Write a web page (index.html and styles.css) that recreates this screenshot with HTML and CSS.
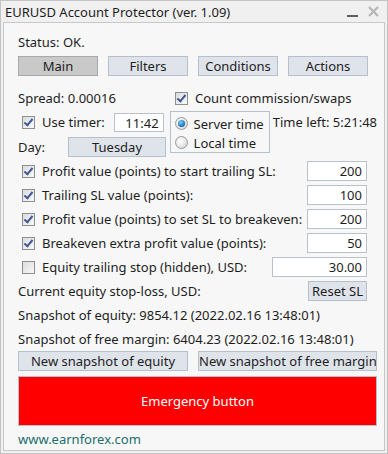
FILE: index.html
```html
<!DOCTYPE html>
<html lang="en">
<head>
  <meta charset="UTF-8" />
  <title>EURUSD Account Protector</title>
  <link rel="stylesheet" href="styles.css">
</head>
<body>
  <div class="window">
    <div class="titlebar">
      <span class="title">EURUSD Account Protector (ver. 1.09)</span>
      <span class="minimize"></span>
      <svg class="close" width="11" height="11" viewBox="0 0 11 11"><path d="M1 1 L10 10 M10 1 L1 10" stroke="#b8b8b8" stroke-width="2.4"/></svg>
    </div>

    <div class="panel">
      <div class="row status">Status: OK.</div>

      <div class="tabs">
        <button class="btn tab active">Main</button>
        <button class="btn tab">Filters</button>
        <button class="btn tab">Conditions</button>
        <button class="btn tab">Actions</button>
      </div>

      <div class="row spread">
        <span class="spread-label">Spread: 0.00016</span>
        <span class="check on"></span>
        <span class="lbl">Count commission/swaps</span>
      </div>

      <div class="timer-block">
        <div class="timer-left">
          <div class="row timer-row">
            <span class="check on"></span>
            <span class="lbl">Use timer:</span>
            <span class="field timer-field">11:42</span>
          </div>
          <div class="row day-row">
            <span class="day-label">Day:</span>
            <button class="btn day-btn">Tuesday</button>
          </div>
        </div>
        <div class="radio-group">
          <div class="radio-row"><span class="radio on"></span><span>Server time</span></div>
          <div class="radio-row"><span class="radio"></span><span>Local time</span></div>
        </div>
        <div class="time-left">Time left: 5:21:48</div>
      </div>

      <div class="row opt"><span class="check on"></span><span class="lbl">Profit value (points) to start trailing SL:</span><span class="field num">200</span></div>
      <div class="row opt"><span class="check on"></span><span class="lbl">Trailing SL value (points):</span><span class="field num">100</span></div>
      <div class="row opt"><span class="check on"></span><span class="lbl">Profit value (points) to set SL to breakeven:</span><span class="field num">200</span></div>
      <div class="row opt"><span class="check on"></span><span class="lbl">Breakeven extra profit value (points):</span><span class="field num">50</span></div>
      <div class="row opt"><span class="check"></span><span class="lbl">Equity trailing stop (hidden), USD:</span><span class="field wide">30.00</span></div>

      <div class="row plain"><span>Current equity stop-loss, USD:</span><button class="btn reset">Reset SL</button></div>
      <div class="row plain">Snapshot of equity: 9854.12 (2022.02.16 13:48:01)</div>
      <div class="row plain">Snapshot of free margin: 6404.23 (2022.02.16 13:48:01)</div>

      <div class="snap-buttons">
        <button class="btn snap">New snapshot of equity</button>
        <button class="btn snap snap-wide">New snapshot of free margin</button>
      </div>

      <button class="emergency">Emergency button</button>

      <div class="footer">www.earnforex.com</div>
    </div>
  </div>
</body>
</html>
```

FILE: styles.css
```css
* { box-sizing: border-box; }
body, html {
  margin: 0; padding: 0;
  font-family: "Noto Sans", sans-serif;
  font-size: 13px;
  color: #1e1e1e;
  background: #ffffff;
}
.window {
  width: 388px;
  height: 454px;
  border: 1px solid #c4c4c4;
  background: #f0f0f0;
  display: flex;
  flex-direction: column;
}
.titlebar {
  height: 21px;
  display: flex;
  align-items: center;
  padding: 0 0 0 4px;
  font-size: 13px;
}
.title { flex: 1; }
.minimize {
  width: 11px;
  height: 2px;
  background: #606060;
  margin-top: 9px;
  margin-right: 10px;
}
.close { margin-right: 8px; }
.panel {
  flex: 1;
  margin: 0 2px 2px 2px;
  border: 1px solid #c8c8c8;
  background: #f7f7f7;
  padding: 9px 7px 0 14px;
}
.row {
  display: flex;
  align-items: center;
  height: 24px;
  white-space: nowrap;
}
.status { height: 20px; }
.tabs {
  display: flex;
  gap: 10px;
  margin-top: 4px;
}
.btn {
  font-family: inherit;
  font-size: 13px;
  color: #1e1e1e;
  background: #dfe3ea;
  border: 1px solid #b6bfcc;
  padding: 0;
  height: 20px;
  line-height: 18px;
  white-space: nowrap;
}
.tab { width: 80px; }
.tab.active {
  background: #c9c9c9;
  border-color: #a9a9a9;
}
.spread { margin-top: 10px; }
.spread-label { width: 157px; }
.check {
  width: 13px;
  height: 13px;
  border: 1px solid #8e8f8f;
  background: linear-gradient(135deg, #dcdcdc, #f8f8f8);
  position: relative;
  flex: none;
}
.check.on::after {
  content: "";
  position: absolute;
  left: 3px;
  top: 0px;
  width: 3px;
  height: 7px;
  border: solid #405a96;
  border-width: 0 2px 2px 0;
  transform: rotate(40deg);
}
.lbl { margin-left: 7px; }
.timer-block {
  display: flex;
  height: 49px;
}
.timer-left { width: 153px; }
.timer-row { height: 22px; margin-top: 1px; padding-left: 4px; }
.timer-row .lbl { flex: 1; }
.field {
  background: #ffffff;
  border: 1px solid #b9c1cc;
  height: 20px;
  line-height: 18px;
  text-align: right;
  padding-right: 4px;
}
.timer-field { width: 50px; height: 19px; margin-right: 6px; }
.day-row { height: 24px; margin-top: 2px; }
.day-label { width: 50px; }
.day-btn { width: 98px; }
.radio-group {
  width: 101px;
  height: 42px;
  margin-top: 1px;
  border: 1px solid #b6bfcc;
  padding: 2px 0 0 4px;
}
.radio-row {
  display: flex;
  align-items: center;
  gap: 6px;
  height: 19px;
  white-space: nowrap;
}
.radio {
  width: 13px;
  height: 13px;
  border-radius: 50%;
  border: 1px solid #9a9a9a;
  background: radial-gradient(circle at 40% 40%, #ffffff, #d0d0d0);
  flex: none;
  position: relative;
}
.radio.on::after {
  content: "";
  position: absolute;
  left: 2px;
  top: 2px;
  width: 7px;
  height: 7px;
  border-radius: 50%;
  background: radial-gradient(circle at 40% 35%, #7fd0ff, #0a6cb0 70%);
}
.time-left { margin-left: 3px; margin-top: 3px; white-space: nowrap; }
.opt { padding-left: 4px; }
.opt .lbl { flex: 1; }
.num { width: 60px; margin-right: 10px; }
.wide { width: 95px; margin-right: 10px; }
.plain { justify-content: space-between; }
.reset { width: 59px; margin-right: 10px; height: 20px; }
.snap-buttons {
  display: flex;
  gap: 10px;
}
.snap { width: 170px; flex: none; overflow: hidden; }
.snap-wide { width: 179px; }
.emergency {
  display: block;
  margin-top: 5px;
  width: 100%;
  height: 50px;
  background: #ff0000;
  border: 1px solid #b0c0cc;
  color: #ffffff;
  font-family: inherit;
  font-size: 13px;
}
.footer {
  color: #1b6e6e;
  margin-top: 6px;
  height: 14px;
  line-height: 14px;
}
```
